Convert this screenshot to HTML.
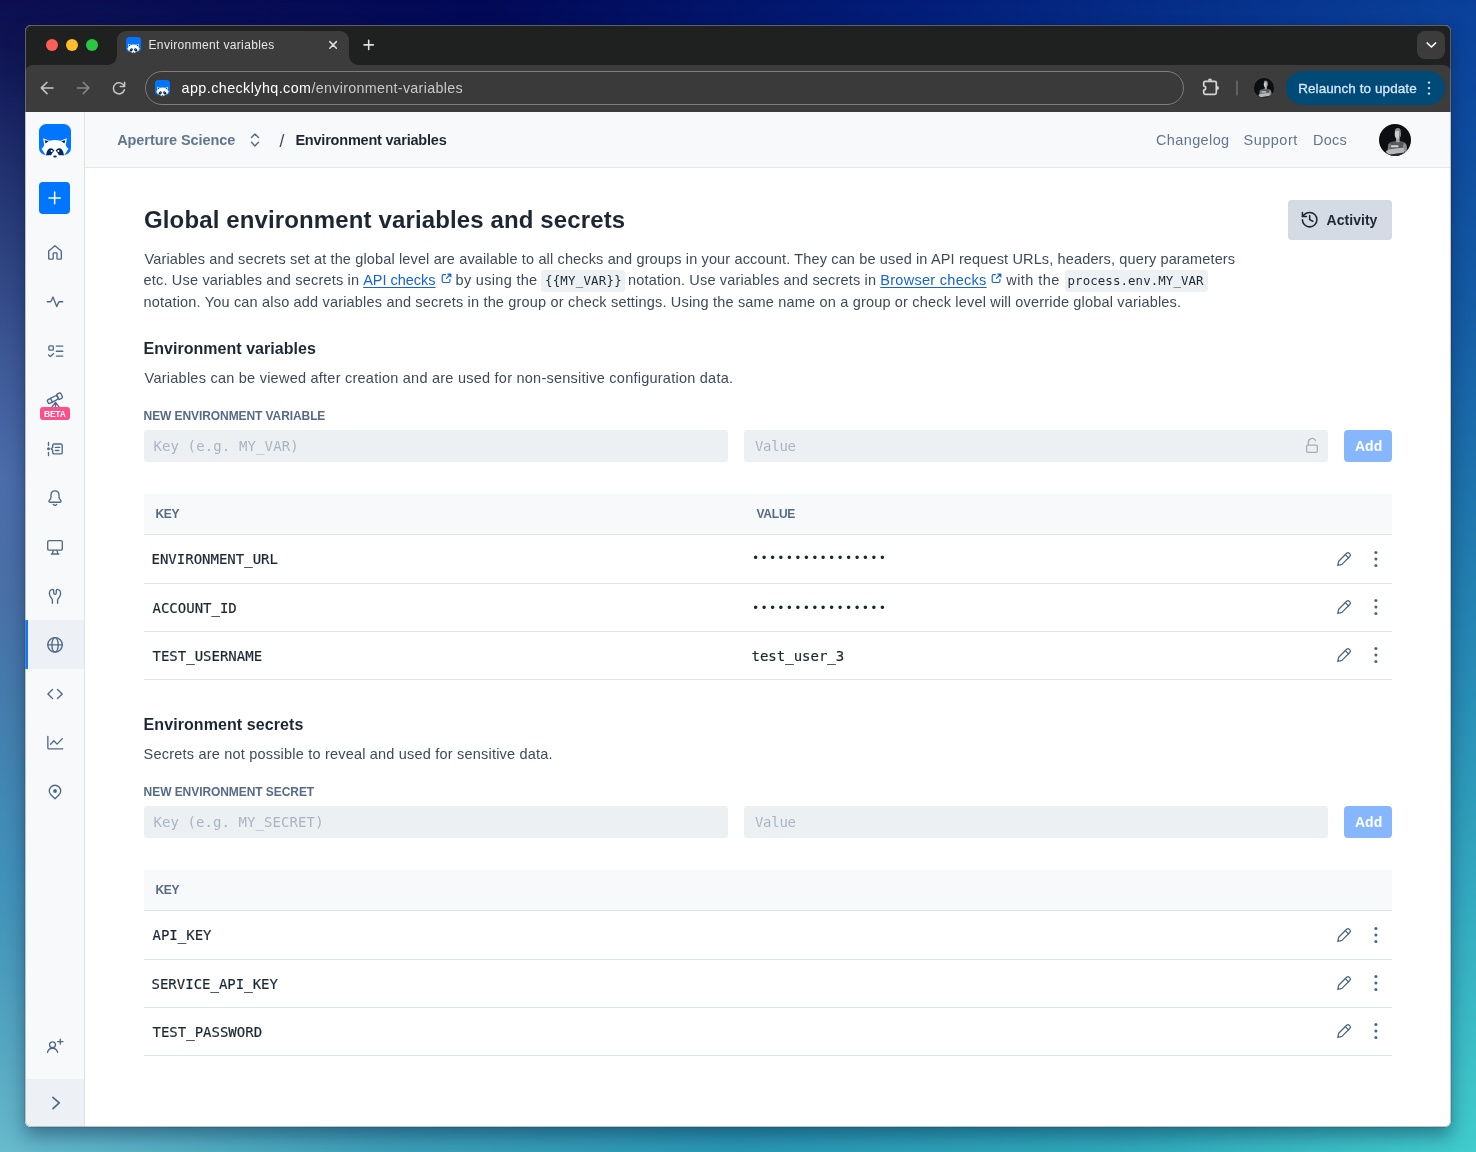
<!DOCTYPE html>
<html lang="en">
<head>
<meta charset="utf-8">
<title>Environment variables</title>
<style>
*{box-sizing:border-box;margin:0;padding:0}
html,body{width:1476px;height:1152px;overflow:hidden}
body{position:relative;font-family:"Liberation Sans",sans-serif;color:#1d2733;
 background:linear-gradient(90deg,#6abccc 0%,#3fa0b8 25%,#2a98b4 50%,#30a8ba 75%,#42cccc 100%);}
#bgtop{left:0;top:0;width:1476px;height:1152px;
 background:linear-gradient(90deg,#0c0e50 0%,#020856 33%,#021c78 62%,#0a409a 100%);
 -webkit-mask-image:linear-gradient(180deg,#000 0%,rgba(0,0,0,.82) 25%,rgba(0,0,0,.5) 55%,rgba(0,0,0,.2) 82%,rgba(0,0,0,0) 100%);
 mask-image:linear-gradient(180deg,#000 0%,rgba(0,0,0,.82) 25%,rgba(0,0,0,.5) 55%,rgba(0,0,0,.2) 82%,rgba(0,0,0,0) 100%);}
#bgl{left:0;top:0;width:400px;height:1152px;background:radial-gradient(ellipse 100% 26% at 0% 76%,rgba(40,150,205,.42) 0%,rgba(40,150,205,0) 100%),radial-gradient(ellipse 100% 38% at 0% 42%,rgba(100,136,208,.55) 0%,rgba(100,136,208,0) 100%)}
.a{position:absolute}
.t{position:absolute;white-space:nowrap;line-height:0;height:0}
.t a{text-decoration:underline;text-underline-offset:2px;text-decoration-thickness:1px}
svg{position:absolute;overflow:visible}
#win{left:25px;top:25px;width:1426px;height:1102px;border-radius:6px;overflow:hidden;background:#fff}
#winsh{left:25px;top:25px;width:1426px;height:1102px;border-radius:6px;box-shadow:0 0 0 .5px rgba(0,0,0,.18),0 9px 18px rgba(0,25,60,.40)}
#winbd{left:25px;top:25px;width:1426px;height:1102px;border-radius:6px;border:1px solid rgba(150,150,150,.55)}
#tabstrip{left:0;top:0;width:1426px;height:52px;background:#1f2020}
#toolbar{left:0;top:40px;width:1426px;height:47px;background:#3c3c3c;border-radius:8px 8px 0 0}
.tl{position:absolute;top:14px;width:12px;height:12px;border-radius:50%}
#tab{left:92px;top:6px;width:232px;height:34px;background:#3c3c3c;border-radius:9px 9px 0 0}
#tab:before,#tab:after{content:"";position:absolute;bottom:0;width:9px;height:9px}
#tab:before{left:-9px;background:radial-gradient(circle at 0 0,rgba(0,0,0,0) 8.5px,#3c3c3c 9px)}
#tab:after{right:-9px;background:radial-gradient(circle at 100% 0,rgba(0,0,0,0) 8.5px,#3c3c3c 9px)}
#tabdd{left:1392px;top:6px;width:28px;height:28px;border-radius:8px;background:#3c3c3c}
#urlbar{left:120px;top:46px;width:1039px;height:34px;border:1px solid #7e7e7e;border-radius:17px;background:#3a3a3a}
#relaunch{left:1261px;top:46px;width:159px;height:34px;border-radius:17px;background:#004a77}
#side{left:0;top:87px;width:60px;height:1015px;background:#f7f9fb;border-right:1px solid #dde3ec}
#sideact{left:0;top:595px;width:59px;height:49px;background:#edf1f5;border-left:3px solid #0d75ff}
#sidebot{left:0;top:1054px;width:59px;height:48px;background:#edf1f5}
#head{left:60px;top:87px;width:1366px;height:56px;background:#f8f9fb;border-bottom:1px solid #e4e8ee}
.inp{position:absolute;height:32px;width:584px;border-radius:3px;background:#edf0f3}
.add{position:absolute;left:1344px;width:48px;height:32px;border-radius:4px;background:#86b7fc}
.th{position:absolute;left:144px;width:1248px;height:40px;background:#f8f9fb}
.hr{position:absolute;left:144px;width:1248px;height:1px;background:#dce3ed}
.code{position:absolute;height:22px;top:269.5px;border-radius:3px;background:#eef1f4}
#act{left:1288px;top:200px;width:104px;height:40px;border-radius:4px;background:#d5dbe5}
</style>
</head>
<body>
<div class="a" id="bgtop"></div><div class="a" id="bgl"></div>
<div class="a" id="winsh"></div>
<div class="a" id="win">
 <div class="a" id="tabstrip">
  <div class="tl" style="left:21px;background:#fe5f57"></div>
  <div class="tl" style="left:41px;background:#febc2e"></div>
  <div class="tl" style="left:61px;background:#28c840"></div>
  <div class="a" id="tab"></div>
  <div class="a" id="tabdd"></div>
 </div>
 <div class="a" id="toolbar"></div>
 <div class="a" id="urlbar"></div>
 <div class="a" id="relaunch"></div>
 <div class="a" id="side"></div>
 <div class="a" id="sideact"></div>
 <div class="a" id="sidebot"></div>
 <div class="a" id="head"></div>
</div>
<div class="a" id="winbd"></div>
<!-- page-coordinate layer -->
<div class="a" id="act"></div>
<div class="code" style="left:541px;width:84px"></div>
<div class="code" style="left:1064.5px;width:143px"></div>
<div class="inp" style="left:144px;top:430px"></div>
<div class="inp" style="left:744px;top:430px"></div>
<div class="add" style="top:430px"></div>
<div class="th" style="top:494px"></div>
<div class="hr" style="top:534px"></div><div class="hr" style="top:583px"></div><div class="hr" style="top:631px"></div><div class="hr" style="top:679px"></div>
<div class="inp" style="left:144px;top:806px"></div>
<div class="inp" style="left:744px;top:806px"></div>
<div class="add" style="top:806px"></div>
<div class="th" style="top:870px"></div>
<div class="hr" style="top:910px"></div><div class="hr" style="top:959px"></div><div class="hr" style="top:1007px"></div><div class="hr" style="top:1055px"></div>
<!-- chrome icons -->
<svg style="left:125.5px;top:37px" width="15" height="16.4" viewBox="0 0 32 35">
   <rect x="0" y="0" width="32" height="31.2" rx="7.3" fill="#0075ff"/>
   <path fill="#fff" d="M4.1 14.3 L10.6 16.7 Q16 15.2 21.4 16.7 L27.9 14.3 L26.7 21 Q27.4 23.6 29.4 24.7 L25.8 30.4 Q21 33 16 34.7 Q11 33 6.2 30.4 L2.6 24.7 Q4.6 23.6 5.3 21 Z"/>
   <path fill="#00285f" d="M5.6 16.2 L9.9 17 L6.6 19.6 Z M26.4 16.2 L22.1 17 L25.4 19.6 Z"/>
   <path fill="#00285f" d="M7.1 31.2 Q7.6 26 10.4 24.4 Q13.2 23.6 15.4 26.6 Q13.6 28.4 12.1 31.2 Z M24.9 31.2 Q24.4 26 21.6 24.4 Q18.8 23.6 16.6 26.6 Q18.4 28.4 19.9 31.2 Z"/>
   <circle cx="12.6" cy="26.9" r="1" fill="#fff"/><circle cx="19.4" cy="26.9" r="1" fill="#fff"/>
   <ellipse cx="16" cy="32.4" rx="1.8" ry="1" fill="#00285f"/>
  </svg>
<svg style="left:155px;top:80.2px" width="15" height="16.4" viewBox="0 0 32 35">
   <rect x="0" y="0" width="32" height="31.2" rx="7.3" fill="#0075ff"/>
   <path fill="#fff" d="M4.1 14.3 L10.6 16.7 Q16 15.2 21.4 16.7 L27.9 14.3 L26.7 21 Q27.4 23.6 29.4 24.7 L25.8 30.4 Q21 33 16 34.7 Q11 33 6.2 30.4 L2.6 24.7 Q4.6 23.6 5.3 21 Z"/>
   <path fill="#00285f" d="M5.6 16.2 L9.9 17 L6.6 19.6 Z M26.4 16.2 L22.1 17 L25.4 19.6 Z"/>
   <path fill="#00285f" d="M7.1 31.2 Q7.6 26 10.4 24.4 Q13.2 23.6 15.4 26.6 Q13.6 28.4 12.1 31.2 Z M24.9 31.2 Q24.4 26 21.6 24.4 Q18.8 23.6 16.6 26.6 Q18.4 28.4 19.9 31.2 Z"/>
   <circle cx="12.6" cy="26.9" r="1" fill="#fff"/><circle cx="19.4" cy="26.9" r="1" fill="#fff"/>
   <ellipse cx="16" cy="32.4" rx="1.8" ry="1" fill="#00285f"/>
  </svg>
<svg style="left:0;top:0" width="1476" height="120" fill="none" stroke-linecap="round" stroke-linejoin="round">
 <path d="M329.8 41.6 L336.4 48.2 M336.4 41.6 L329.8 48.2" stroke="#dedede" stroke-width="1.5"/>
 <path d="M364.1 44.9 H373.3 M368.7 40.3 V49.5" stroke="#dedede" stroke-width="1.6"/>
 <path d="M1427.2 43 L1431.4 47 L1435.6 43" stroke="#fff" stroke-width="1.7"/>
 <path d="M53 87.9 H41.6 M47 82.2 L41.3 87.9 L47 93.6" stroke="#c7c7c7" stroke-width="1.5"/>
 <path d="M77.2 87.9 H88.6 M83.2 82.2 L88.9 87.9 L83.2 93.6" stroke="#858585" stroke-width="1.5"/>
 <path d="M124.2 86.2 A5.6 5.6 0 1 0 124.4 89.8" stroke="#c7c7c7" stroke-width="1.5"/>
 <path d="M124.6 82.2 V86.6 H120.2" stroke="#c7c7c7" stroke-width="1.5"/>
 <path d="M1205.2 81.3 H1214.8 Q1216.3 81.3 1216.3 82.8 V92.8 Q1216.3 94.3 1214.8 94.3 H1205.2 Q1203.7 94.3 1203.7 92.8 V90 A2 2 0 0 0 1203.7 86 V82.8 Q1203.7 81.3 1205.2 81.3 Z" stroke="#d4d4d4" stroke-width="1.7"/>
 <path d="M1207.9 80.7 A2.1 2.1 0 0 1 1212.1 80.7 Z M1216.9 85.9 A2.1 2.1 0 0 1 1216.9 90.1 Z" fill="#d4d4d4" stroke="none"/>
 <path d="M1237 80.4 V95.4" stroke="#6c6c6c" stroke-width="1.5" stroke-linecap="butt"/>
</svg>
<svg style="left:1254.1px;top:78px" width="20" height="20" viewBox="0 0 32 32"><filter id="bl1" x="-20%" y="-20%" width="140%" height="140%"><feGaussianBlur stdDeviation="0.7"/></filter>
   <clipPath id="avc1"><circle cx="16" cy="16" r="16"/></clipPath>
   <circle cx="16" cy="16" r="16" fill="#0d0e11"/>
   <g clip-path="url(#avc1)"><g filter="url(#bl1)">
    <path d="M9 33 L9.2 21 Q9.6 18.2 13 17.7 L17 17 L21 17 L25 17.9 Q27.4 18.5 27.6 21.5 L28 33 Z" fill="#54585f"/>
    <path d="M24.6 19 Q27.7 19.6 27.9 24 L27.2 28 L23.5 27 Z" fill="#8f9094"/>
    <path d="M9.4 20 Q8.6 24 8.6 27 L11.2 27 L11.6 20 Z" fill="#75787e"/>
    <rect x="17.1" y="13" width="3.5" height="5.2" fill="#a6a6a6"/>
    <ellipse cx="18.7" cy="9.9" rx="3" ry="4.7" fill="#cdcdcd"/>
    <path d="M20.2 6 Q22 8 21.5 12.5 Q20.8 14.4 19.6 14.6 Q20.6 11 20.2 6Z" fill="#777"/>
    <path d="M15.7 7.4 Q15.8 3.8 18.9 3.9 Q22 4 21.8 7.8 Q19 5.8 15.7 7.4Z" fill="#8a8a8a"/>
    <rect x="12" y="21.2" width="7.4" height="2.1" fill="#cfcfcf"/>
    <path d="M6.8 27.2 Q10 24.5 14 24.7 L24 23.7 Q26.4 25.7 24.6 28.4 L12 30.6 Q8 30 6.8 27.2 Z" fill="#b7b7b7"/>
    <path d="M8 31 L24 28.8 L25 33 L8 33Z" fill="#2a2c30"/>
   </g></g>
  </svg>
<svg style="left:0;top:0" width="1476" height="120"><circle cx="1429" cy="82.6" r="1.2" fill="#d3e3fd"/><circle cx="1429" cy="88.1" r="1.2" fill="#d3e3fd"/><circle cx="1429" cy="93.6" r="1.2" fill="#d3e3fd"/></svg>
<!-- sidebar -->
<svg style="left:39px;top:123.7px" width="32" height="35" viewBox="0 0 32 35">
   <rect x="0" y="0" width="32" height="31.2" rx="7.3" fill="#0075ff"/>
   <path fill="#fff" d="M4.1 14.3 L10.6 16.7 Q16 15.2 21.4 16.7 L27.9 14.3 L26.7 21 Q27.4 23.6 29.4 24.7 L25.8 30.4 Q21 33 16 34.7 Q11 33 6.2 30.4 L2.6 24.7 Q4.6 23.6 5.3 21 Z"/>
   <path fill="#00285f" d="M5.6 16.2 L9.9 17 L6.6 19.6 Z M26.4 16.2 L22.1 17 L25.4 19.6 Z"/>
   <path fill="#00285f" d="M7.1 31.2 Q7.6 26 10.4 24.4 Q13.2 23.6 15.4 26.6 Q13.6 28.4 12.1 31.2 Z M24.9 31.2 Q24.4 26 21.6 24.4 Q18.8 23.6 16.6 26.6 Q18.4 28.4 19.9 31.2 Z"/>
   <circle cx="12.6" cy="26.9" r="1" fill="#fff"/><circle cx="19.4" cy="26.9" r="1" fill="#fff"/>
   <ellipse cx="16" cy="32.4" rx="1.8" ry="1" fill="#00285f"/>
  </svg>
<div class="a" style="left:39px;top:182px;width:31px;height:32px;border-radius:4px;background:#0075ff"></div>
<svg style="left:0;top:0" width="100" height="1152" fill="none" stroke="#506987" stroke-width="1.35" stroke-linecap="round" stroke-linejoin="round">
 <path d="M48.9 197.9 H60.4 M54.65 192.1 V203.7" stroke="#fff" stroke-width="1.5"/>
 <!-- home -->
 <path d="M48.7 251 L54.95 245.8 L61.3 251 V258.5 Q61.3 259.1 60.7 259.1 H57.6 Q57 259.1 57 258.5 V253.4 Q57 252.8 56.4 252.8 H53.8 Q53.2 252.8 53.2 253.4 V258.5 Q53.2 259.1 52.6 259.1 H49.3 Q48.7 259.1 48.7 258.5 Z"/>
 <!-- pulse -->
 <path d="M47.3 301.7 H50.2 Q50.9 301.7 51.2 301 L53 297 L56.7 306.6 L58.6 302.4 Q58.9 301.7 59.6 301.7 H62.7"/>
 <!-- checklist -->
 <rect x="48.9" y="345.8" width="4.4" height="4.4" rx="1"/>
 <path d="M56.3 346.1 H62.8 M56.3 351.2 H62.8 M56.3 356.1 H62.8 M48.6 354.9 L50.3 356.6 L53.7 353.6"/>
 <!-- telescope -->
 <g transform="translate(54.6 398.6) rotate(-27)">
  <rect x="-7.6" y="-2.1" width="11.2" height="4.2" rx="1.4"/>
  <rect x="3.2" y="-2.9" width="4.6" height="5.8" rx="1.5"/>
  <path d="M-3.6 -2.1 V2.1"/>
 </g>
 <path d="M55.5 402.4 L51.6 407.4 M55.5 402.4 L59.4 407.4 M55.5 402.4 V407"/>
 <!-- traces -->
 <path d="M48.5 442.4 V445.4 M48.5 452.4 V455.6"/>
 <circle cx="48.5" cy="448.8" r="1.5" fill="#506987" stroke="none"/>
 <path d="M54.2 444 H60.7 Q62.2 444 62.2 445.5 V452.4 Q62.2 453.9 60.7 453.9 H54.2 Q52.7 453.9 52.7 452.4 V450.2 L51.2 448.8 L52.7 447.4 V445.5 Q52.7 444 54.2 444 Z"/>
 <path d="M55.4 447.4 H59.7 M55.4 450.5 H58.9"/>
 <!-- bell -->
 <path d="M55 490.8 C52.6 490.8 51 492.6 51 495 V497 C51 498.4 50.4 499.3 49.4 500.3 C48.6 501.1 48.9 502.2 50 502.2 H60 C61.2 502.2 61.4 501.1 60.6 500.3 C59.6 499.3 59 498.4 59 497 V495 C59 492.6 57.4 490.8 55 490.8 Z"/>
 <path d="M53.3 504.4 Q55 506 56.7 504.4"/>
 <!-- monitor -->
 <rect x="47.7" y="540.6" width="14.6" height="9.6" rx="1.5"/>
 <path d="M53.3 550.4 L52.2 554 M56.9 550.4 L58 554 M51.4 554 H58.8"/>
 <!-- wrench -->
 <path d="M52.4 603.3 V600 C52.4 598.5 49.4 597 49.4 593.6 C49.4 591.5 50.8 589.6 52.6 589.4 C53.4 589.4 53.7 590 53.7 590.6 V592.8 C53.7 594.9 56.3 594.9 56.3 592.8 V590.6 C56.3 590 56.6 589.4 57.4 589.4 C59.2 589.6 60.6 591.5 60.6 593.6 C60.6 597 57.6 598.5 57.6 600 V603.3"/>
 <!-- globe -->
 <circle cx="55.05" cy="644.85" r="7.3"/>
 <ellipse cx="55.05" cy="644.85" rx="3.2" ry="7.3"/>
 <path d="M47.8 644.85 H62.3"/>
 <!-- code -->
 <path d="M52.5 689.5 L47.9 694 L52.5 698.5 M57.5 689.5 L62.2 694 L57.5 698.5"/>
 <!-- chart -->
 <path d="M47.85 736.3 V747.7 Q47.85 748.9 49 748.9 H62.7 M50.5 744.3 L53.9 740.8 L57.05 744.1 L62.3 738.6"/>
 <!-- pin -->
 <path d="M55 798.7 L51.1 795.07 A5.7 5.7 0 1 1 58.9 795.07 Z"/>
 <circle cx="55.05" cy="791" r="1.9" fill="#506987" stroke="none"/>
 <!-- user+ -->
 <circle cx="52.5" cy="1044.75" r="2.95"/>
 <path d="M47.5 1052.4 Q48.4 1048.2 52.5 1048.2 Q56.7 1048.2 57.6 1052.4 M57.6 1041.6 H62.9 M60.25 1039.1 V1044.1"/>
 <!-- chevron -->
 <path d="M52.9 1097.4 L59.2 1102.9 L53 1108.7" stroke-width="1.6" stroke="#4b6584"/>
</svg>
<div class="a" style="left:40px;top:407px;width:30px;height:13px;border-radius:3px;background:#ff4f8b"></div>
<!-- header -->
<svg style="left:0;top:0" width="1476" height="170" fill="none" stroke="#506987" stroke-width="1.4" stroke-linecap="round" stroke-linejoin="round">
 <path d="M251.5 137.5 L254.95 133.9 L258.5 137.5 M251.5 142.3 L254.95 145.9 L258.5 142.3"/>
</svg>
<svg style="left:1379px;top:123.8px" width="32" height="32" viewBox="0 0 32 32"><filter id="bl2" x="-20%" y="-20%" width="140%" height="140%"><feGaussianBlur stdDeviation="0.7"/></filter>
   <clipPath id="avc2"><circle cx="16" cy="16" r="16"/></clipPath>
   <circle cx="16" cy="16" r="16" fill="#0d0e11"/>
   <g clip-path="url(#avc2)"><g filter="url(#bl2)">
    <path d="M9 33 L9.2 21 Q9.6 18.2 13 17.7 L17 17 L21 17 L25 17.9 Q27.4 18.5 27.6 21.5 L28 33 Z" fill="#54585f"/>
    <path d="M24.6 19 Q27.7 19.6 27.9 24 L27.2 28 L23.5 27 Z" fill="#8f9094"/>
    <path d="M9.4 20 Q8.6 24 8.6 27 L11.2 27 L11.6 20 Z" fill="#75787e"/>
    <rect x="17.1" y="13" width="3.5" height="5.2" fill="#a6a6a6"/>
    <ellipse cx="18.7" cy="9.9" rx="3" ry="4.7" fill="#cdcdcd"/>
    <path d="M20.2 6 Q22 8 21.5 12.5 Q20.8 14.4 19.6 14.6 Q20.6 11 20.2 6Z" fill="#777"/>
    <path d="M15.7 7.4 Q15.8 3.8 18.9 3.9 Q22 4 21.8 7.8 Q19 5.8 15.7 7.4Z" fill="#8a8a8a"/>
    <rect x="12" y="21.2" width="7.4" height="2.1" fill="#cfcfcf"/>
    <path d="M6.8 27.2 Q10 24.5 14 24.7 L24 23.7 Q26.4 25.7 24.6 28.4 L12 30.6 Q8 30 6.8 27.2 Z" fill="#b7b7b7"/>
    <path d="M8 31 L24 28.8 L25 33 L8 33Z" fill="#2a2c30"/>
   </g></g>
  </svg>
<!-- main icons -->
<svg style="left:1300.2px;top:210.2px" width="19.3" height="19.3" viewBox="0 0 24 24" fill="none" stroke="#1d2733" stroke-width="1.9" stroke-linecap="round" stroke-linejoin="round"><path d="M3 12a9 9 0 1 0 9-9 9.75 9.75 0 0 0-6.74 2.74L3 8"/><path d="M3 3v5h5"/><path d="M12 7v5l4 2"/></svg>
<svg style="left:0;top:0" width="1476" height="1152" fill="none" stroke-linecap="round" stroke-linejoin="round">
 <g stroke="#1a63d0" stroke-width="1.2">
  <path d="M445.4 274.7 H443.4 Q442.2 274.7 442.2 275.9 V281.3 Q442.2 282.5 443.4 282.5 H448.7 Q449.9 282.5 449.9 281.3 V279.4"/>
  <path d="M446.4 278.4 L450.2 274.6"/>
  <path d="M447.9 273.9 H451 V277 Z" fill="#1a63d0" stroke-width=".8"/>
 </g>
 <g stroke="#1a63d0" stroke-width="1.2" transform="translate(550 0)">
  <path d="M445.4 274.7 H443.4 Q442.2 274.7 442.2 275.9 V281.3 Q442.2 282.5 443.4 282.5 H448.7 Q449.9 282.5 449.9 281.3 V279.4"/>
  <path d="M446.4 278.4 L450.2 274.6"/>
  <path d="M447.9 273.9 H451 V277 Z" fill="#1a63d0" stroke-width=".8"/>
 </g>
 <g stroke="#a9adb3" stroke-width="1.3">
  <rect x="1306.65" y="445.1" width="10.7" height="7.2" rx="1.3"/>
  <path d="M1308.3 445 V442.5 A3.85 3.85 0 0 1 1315.6 440.6"/>
 </g>
 <g stroke="#4b6584" stroke-width="1.25">
  <path d="M1337.7 565.4 L1338.7 561.2 L1346.6 553.3 Q1347.9 552 1349.2 553.3 L1349.8 553.9 Q1351.1 555.2 1349.8 556.5 L1341.9 564.4 Z"/>
  <path d="M1345.3 554.6 L1348.5 557.8"/>
 </g>
 <g fill="#4b6584" stroke="none"><circle cx="1375.9" cy="552.5" r="1.55"/><circle cx="1375.9" cy="559" r="1.55"/><circle cx="1375.9" cy="565.5" r="1.55"/></g>
 <g stroke="#4b6584" stroke-width="1.25" transform="translate(0 48)">
  <path d="M1337.7 565.4 L1338.7 561.2 L1346.6 553.3 Q1347.9 552 1349.2 553.3 L1349.8 553.9 Q1351.1 555.2 1349.8 556.5 L1341.9 564.4 Z"/>
  <path d="M1345.3 554.6 L1348.5 557.8"/>
 </g><g fill="#4b6584" stroke="none" transform="translate(0 48)"><circle cx="1375.9" cy="552.5" r="1.55"/><circle cx="1375.9" cy="559" r="1.55"/><circle cx="1375.9" cy="565.5" r="1.55"/></g>
 <g stroke="#4b6584" stroke-width="1.25" transform="translate(0 96)">
  <path d="M1337.7 565.4 L1338.7 561.2 L1346.6 553.3 Q1347.9 552 1349.2 553.3 L1349.8 553.9 Q1351.1 555.2 1349.8 556.5 L1341.9 564.4 Z"/>
  <path d="M1345.3 554.6 L1348.5 557.8"/>
 </g><g fill="#4b6584" stroke="none" transform="translate(0 96)"><circle cx="1375.9" cy="552.5" r="1.55"/><circle cx="1375.9" cy="559" r="1.55"/><circle cx="1375.9" cy="565.5" r="1.55"/></g>
 <g stroke="#4b6584" stroke-width="1.25" transform="translate(0 376)">
  <path d="M1337.7 565.4 L1338.7 561.2 L1346.6 553.3 Q1347.9 552 1349.2 553.3 L1349.8 553.9 Q1351.1 555.2 1349.8 556.5 L1341.9 564.4 Z"/>
  <path d="M1345.3 554.6 L1348.5 557.8"/>
 </g><g fill="#4b6584" stroke="none" transform="translate(0 376)"><circle cx="1375.9" cy="552.5" r="1.55"/><circle cx="1375.9" cy="559" r="1.55"/><circle cx="1375.9" cy="565.5" r="1.55"/></g>
 <g stroke="#4b6584" stroke-width="1.25" transform="translate(0 424)">
  <path d="M1337.7 565.4 L1338.7 561.2 L1346.6 553.3 Q1347.9 552 1349.2 553.3 L1349.8 553.9 Q1351.1 555.2 1349.8 556.5 L1341.9 564.4 Z"/>
  <path d="M1345.3 554.6 L1348.5 557.8"/>
 </g><g fill="#4b6584" stroke="none" transform="translate(0 424)"><circle cx="1375.9" cy="552.5" r="1.55"/><circle cx="1375.9" cy="559" r="1.55"/><circle cx="1375.9" cy="565.5" r="1.55"/></g>
 <g stroke="#4b6584" stroke-width="1.25" transform="translate(0 472)">
  <path d="M1337.7 565.4 L1338.7 561.2 L1346.6 553.3 Q1347.9 552 1349.2 553.3 L1349.8 553.9 Q1351.1 555.2 1349.8 556.5 L1341.9 564.4 Z"/>
  <path d="M1345.3 554.6 L1348.5 557.8"/>
 </g><g fill="#4b6584" stroke="none" transform="translate(0 472)"><circle cx="1375.9" cy="552.5" r="1.55"/><circle cx="1375.9" cy="559" r="1.55"/><circle cx="1375.9" cy="565.5" r="1.55"/></g>
</svg>

<div class="a" id="txt" style="left:0;top:0;width:1476px;height:1152px;will-change:transform">
<div class="t" id="tabtitle" style="left:148.50px;top:45.30px;font-size:12px;color:#e6e6e6;letter-spacing:0.350px;">Environment variables</div>
<div class="t" id="url1" style="left:181.60px;top:88.00px;font-size:14.3px;color:#ffffff;letter-spacing:0.438px;">app.checklyhq.com</div>
<div class="t" id="url2" style="left:311.40px;top:88.00px;font-size:14.3px;color:#c9c9c9;letter-spacing:0.314px;">/environment-variables</div>
<div class="t" id="relt" style="left:1298.20px;top:89.00px;font-size:13.5px;color:#d6e8fb;letter-spacing:0.082px;-webkit-text-stroke:.3px;">Relaunch to update</div>
<div class="t" id="crumb1" style="left:117.20px;top:140.00px;font-size:14.5px;color:#61768f;font-weight:bold;letter-spacing:-0.080px;">Aperture Science</div>
<div class="t" id="crumbsl" style="left:279.50px;top:141.00px;font-size:17.5px;color:#3f4a5a;">/</div>
<div class="t" id="crumb2" style="left:295.40px;top:140.00px;font-size:14.5px;color:#1d2733;font-weight:bold;letter-spacing:-0.210px;">Environment variables</div>
<div class="t" id="hl1" style="left:1156.00px;top:140.00px;font-size:14.5px;color:#61768f;letter-spacing:0.375px;">Changelog</div>
<div class="t" id="hl2" style="left:1243.50px;top:140.00px;font-size:14.5px;color:#61768f;letter-spacing:0.500px;">Support</div>
<div class="t" id="hl3" style="left:1312.90px;top:140.00px;font-size:14.5px;color:#61768f;letter-spacing:0.267px;">Docs</div>
<h1 class="t" id="h1" style="left:144.00px;top:220.00px;font-size:24px;color:#1d2733;font-weight:bold;letter-spacing:0.128px;">Global environment variables and secrets</h1>
<div class="t" id="actt" style="left:1326.60px;top:219.60px;font-size:14px;color:#1d2733;font-weight:bold;letter-spacing:0.029px;">Activity</div>
<p class="t" id="p1" style="left:144.50px;top:259.00px;font-size:14.5px;color:#3e4a5a;letter-spacing:0.141px;">Variables and secrets set at the global level are available to all checks and groups in your account. They can be used in API request URLs, headers, query parameters</p>
<p class="t" id="p2a" style="left:143.50px;top:280.00px;font-size:14.5px;color:#3e4a5a;letter-spacing:0.188px;">etc. Use variables and secrets in</p>
<p class="t" id="p2b" style="left:363.20px;top:280.00px;font-size:14.5px;color:#1463d8;letter-spacing:-0.022px;"><a>API checks</a></p>
<p class="t" id="p2c" style="left:455.60px;top:280.00px;font-size:14.5px;color:#3e4a5a;letter-spacing:0.309px;">by using the</p>
<div class="t" id="c1" style="left:545.00px;top:281.00px;font-size:12.4px;color:#1d2733;font-family:'DejaVu Sans Mono','Liberation Mono',monospace;letter-spacing:0.222px;">{{MY_VAR}}</div>
<p class="t" id="p2d" style="left:628.00px;top:280.00px;font-size:14.5px;color:#3e4a5a;letter-spacing:0.168px;">notation. Use variables and secrets in</p>
<p class="t" id="p2e" style="left:880.20px;top:280.00px;font-size:14.5px;color:#1463d8;letter-spacing:0.292px;"><a>Browser checks</a></p>
<p class="t" id="p2f" style="left:1006.30px;top:280.00px;font-size:14.5px;color:#3e4a5a;letter-spacing:0.429px;">with the</p>
<div class="t" id="c2" style="left:1067.50px;top:281.00px;font-size:12.4px;color:#1d2733;font-family:'DejaVu Sans Mono','Liberation Mono',monospace;letter-spacing:0.106px;">process.env.MY_VAR</div>
<p class="t" id="p3" style="left:143.50px;top:302.00px;font-size:14.5px;color:#3e4a5a;letter-spacing:0.181px;">notation. You can also add variables and secrets in the group or check settings. Using the same name on a group or check level will override global variables.</p>
<h2 class="t" id="h2a" style="left:143.60px;top:349.00px;font-size:16px;color:#1d2733;font-weight:bold;letter-spacing:0.030px;">Environment variables</h2>
<p class="t" id="p4a" style="left:144.60px;top:378.00px;font-size:14.5px;color:#3e4a5a;letter-spacing:0.241px;">Variables can be viewed after creation and are used for non-sensitive configuration data.</p>
<label class="t" id="laba" style="left:143.60px;top:416.00px;font-size:12px;color:#566b89;font-weight:bold;letter-spacing:-0.087px;">NEW ENVIRONMENT VARIABLE</label>
<div class="t" id="ph1a" style="left:153.40px;top:446.00px;font-size:14px;color:#a9b5c4;font-family:'DejaVu Sans Mono','Liberation Mono',monospace;letter-spacing:0.125px;">Key (e.g. MY_VAR)</div>
<div class="t" id="ph2a" style="left:754.90px;top:446.00px;font-size:14px;color:#a9b5c4;font-family:'DejaVu Sans Mono','Liberation Mono',monospace;letter-spacing:-0.250px;">Value</div>
<div class="t" id="adda" style="left:1355.00px;top:446.00px;font-size:14px;color:#ffffff;font-weight:bold;">Add</div>
<div class="t" id="thka" style="left:155.40px;top:514.00px;font-size:12px;color:#566b89;font-weight:bold;letter-spacing:-0.300px;">KEY</div>
<h2 class="t" id="h2b" style="left:143.60px;top:725.00px;font-size:16px;color:#1d2733;font-weight:bold;letter-spacing:0.078px;">Environment secrets</h2>
<p class="t" id="p4b" style="left:143.60px;top:754.00px;font-size:14.5px;color:#3e4a5a;letter-spacing:0.200px;">Secrets are not possible to reveal and used for sensitive data.</p>
<label class="t" id="labb" style="left:143.60px;top:792.00px;font-size:12px;color:#566b89;font-weight:bold;letter-spacing:-0.067px;">NEW ENVIRONMENT SECRET</label>
<div class="t" id="ph1b" style="left:153.40px;top:822.00px;font-size:14px;color:#a9b5c4;font-family:'DejaVu Sans Mono','Liberation Mono',monospace;letter-spacing:0.084px;">Key (e.g. MY_SECRET)</div>
<div class="t" id="ph2b" style="left:754.90px;top:822.00px;font-size:14px;color:#a9b5c4;font-family:'DejaVu Sans Mono','Liberation Mono',monospace;letter-spacing:-0.250px;">Value</div>
<div class="t" id="addb" style="left:1355.00px;top:822.00px;font-size:14px;color:#ffffff;font-weight:bold;">Add</div>
<div class="t" id="thkb" style="left:155.40px;top:890.00px;font-size:12px;color:#566b89;font-weight:bold;letter-spacing:-0.300px;">KEY</div>
<div class="t" id="thv" style="left:756.40px;top:514.00px;font-size:12px;color:#566b89;font-weight:bold;letter-spacing:-0.200px;">VALUE</div>
<div class="t" id="k1" style="left:151.50px;top:559.00px;font-size:14px;color:#1d2733;font-family:'DejaVu Sans Mono','Liberation Mono',monospace;-webkit-text-stroke:.2px;">ENVIRONMENT_URL</div>
<div class="t" id="k2" style="left:152.50px;top:608.00px;font-size:14px;color:#1d2733;font-family:'DejaVu Sans Mono','Liberation Mono',monospace;-webkit-text-stroke:.2px;">ACCOUNT_ID</div>
<div class="t" id="k3" style="left:152.50px;top:656.00px;font-size:14px;color:#1d2733;font-family:'DejaVu Sans Mono','Liberation Mono',monospace;-webkit-text-stroke:.2px;">TEST_USERNAME</div>
<div class="t" id="v3" style="left:751.50px;top:656.00px;font-size:14px;color:#1d2733;font-family:'DejaVu Sans Mono','Liberation Mono',monospace;-webkit-text-stroke:.2px;">test_user_3</div>
<div class="t" id="k4" style="left:152.50px;top:935.00px;font-size:14px;color:#1d2733;font-family:'DejaVu Sans Mono','Liberation Mono',monospace;-webkit-text-stroke:.2px;">API_KEY</div>
<div class="t" id="k5" style="left:151.50px;top:984.00px;font-size:14px;color:#1d2733;font-family:'DejaVu Sans Mono','Liberation Mono',monospace;-webkit-text-stroke:.2px;">SERVICE_API_KEY</div>
<div class="t" id="k6" style="left:152.50px;top:1032.00px;font-size:14px;color:#1d2733;font-family:'DejaVu Sans Mono','Liberation Mono',monospace;-webkit-text-stroke:.2px;">TEST_PASSWORD</div>
<div class="t" id="beta" style="left:43.90px;top:414.00px;font-size:9.7px;color:#ffffff;font-weight:bold;letter-spacing:-0.200px;transform:scaleX(.87);transform-origin:0 0;">BETA</div>
<div class="t" id="d1" style="left:752.00px;top:558.00px;font-size:12px;color:#1d2733;font-family:'DejaVu Sans Mono','Liberation Mono',monospace;letter-spacing:1.227px;">••••••••••••••••</div>
<div class="t" id="d2" style="left:752.00px;top:608.00px;font-size:12px;color:#1d2733;font-family:'DejaVu Sans Mono','Liberation Mono',monospace;letter-spacing:1.227px;">••••••••••••••••</div>
</div>
</body>
</html>
